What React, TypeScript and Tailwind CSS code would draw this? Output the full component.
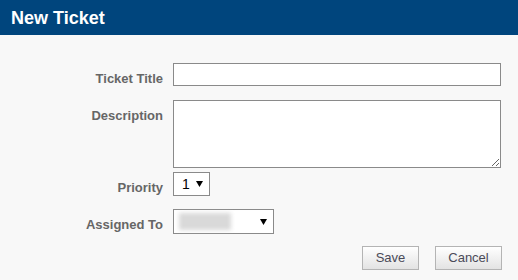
import React from "react";

function FakeSelect({ width, children }: { width: string; children?: React.ReactNode }) {
  return (
    <div
      className={`${width} h-full border border-[#8a8a8a] bg-white flex items-center relative`}
    >
      {children}
      <svg
        className="absolute right-[6px] top-1/2 -translate-y-1/2"
        width="7"
        height="6"
        viewBox="0 0 7 6"
      >
        <path d="M0 0 H7 L3.5 6 Z" fill="#000" />
      </svg>
    </div>
  );
}

function Row({
  label,
  className,
  children,
}: {
  label: string;
  className: string;
  children: React.ReactNode;
}) {
  return (
    <div className={`flex items-start ${className}`}>
      <label className="w-[163px] text-right pt-[8px] text-[13px] leading-[15px] font-bold text-[#666]">
        {label}
      </label>
      <div className="ml-[10px]">{children}</div>
    </div>
  );
}

export default function App() {
  return (
    <div
      className="w-[518px] h-[280px] bg-[#f8f8f8] overflow-hidden"
      style={{ fontFamily: '"Liberation Sans", Arial, sans-serif' }}
    >
      <header className="h-[35px] bg-[#00457d] flex items-center px-[11px]">
        <h1 className="text-white text-[18px] font-bold leading-none">New Ticket</h1>
      </header>

      <form className="flex flex-col">
        <Row label="Ticket Title" className="mt-[28px]">
          <input
            type="text"
            className="block w-[328px] h-[23px] border border-[#8a8a8a] bg-white outline-none"
          />
        </Row>

        <Row label="Description" className="mt-[14px]">
          <textarea className="block w-[328px] h-[68px] border border-[#8a8a8a] bg-white outline-none" />
        </Row>

        <Row label="Priority" className="mt-[4px]">
          <div className="h-[24px]">
            <FakeSelect width="w-[37px]">
              <span className="pl-[8px] text-[14px] leading-none text-black">1</span>
            </FakeSelect>
          </div>
        </Row>

        <Row label="Assigned To" className="mt-[13px]">
          <div className="h-[25px]">
            <FakeSelect width="w-[101px]">
              <div className="ml-[5px] w-[52px] h-[17px] bg-[#d9d9d9] blur-[2px]" />
            </FakeSelect>
          </div>
        </Row>

        <div className="flex justify-end gap-[16px] mt-[12px] pr-[16px]">
          <button
            type="button"
            className="w-[57px] h-[24px] border border-[#b4b4b4] bg-gradient-to-b from-white to-[#e3e3e3] text-[13px] text-[#4a4a58]"
          >
            Save
          </button>
          <button
            type="button"
            className="w-[67px] h-[24px] border border-[#b4b4b4] bg-gradient-to-b from-white to-[#e3e3e3] text-[13px] text-[#4a4a58]"
          >
            Cancel
          </button>
        </div>
      </form>
    </div>
  );
}
